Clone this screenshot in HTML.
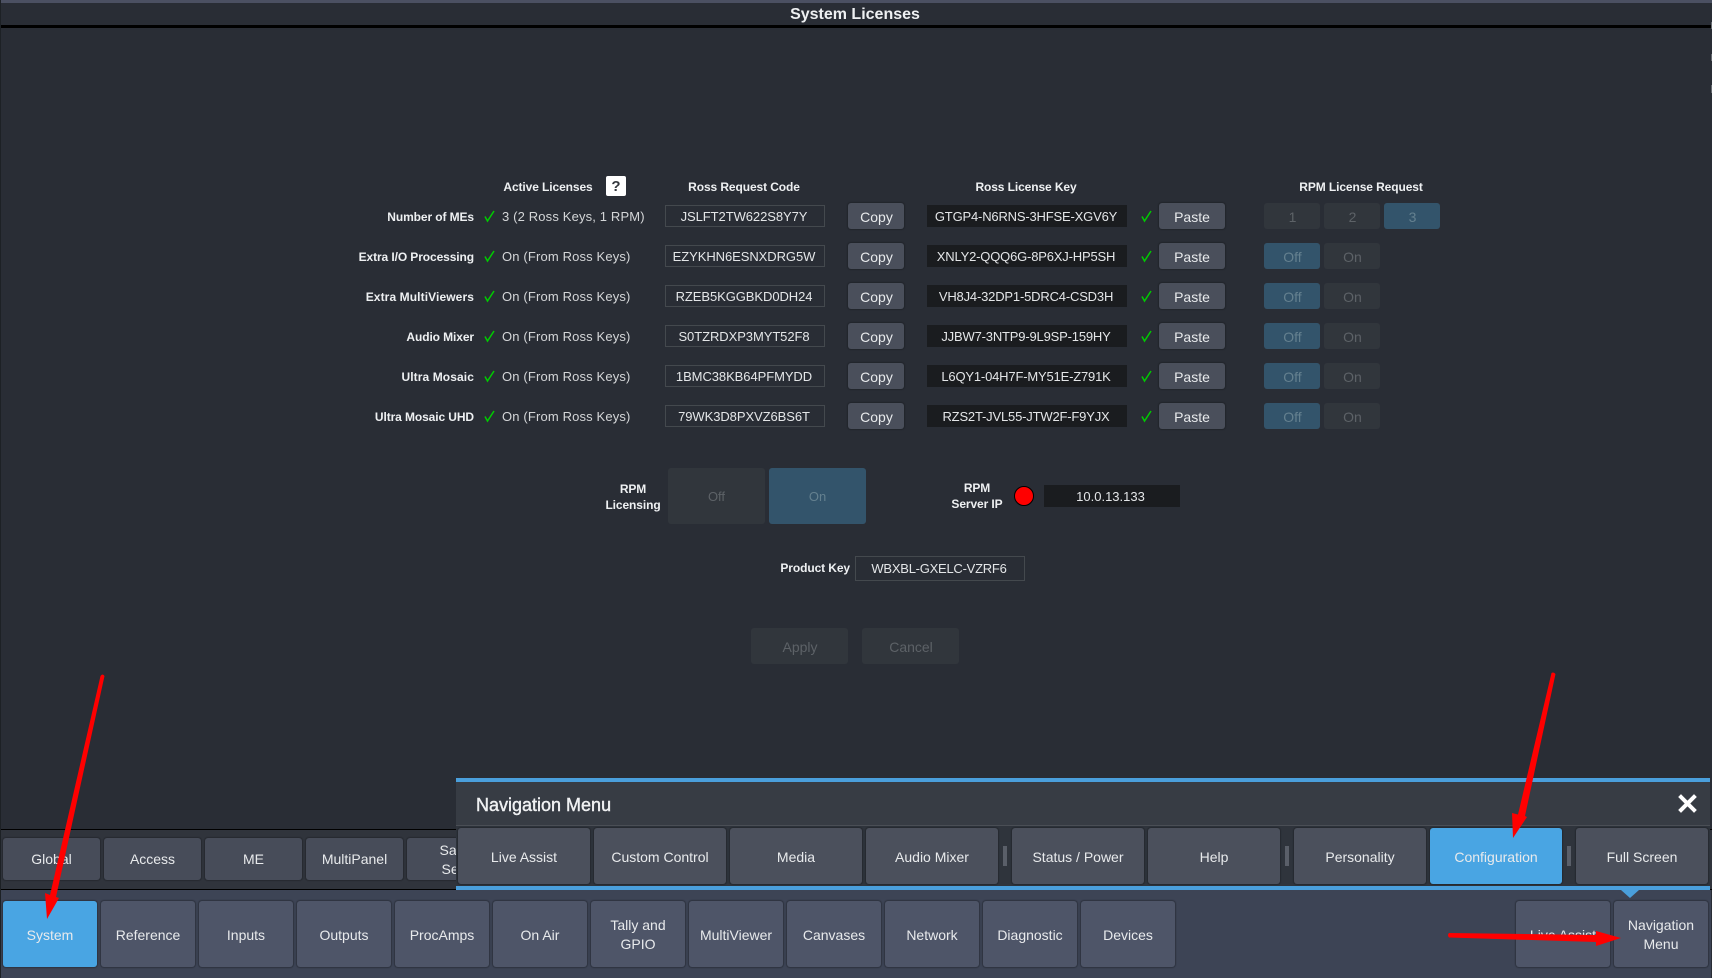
<!DOCTYPE html>
<html><head><meta charset="utf-8"><title>System Licenses</title>
<style>
html,body{margin:0;padding:0;width:1712px;height:978px;overflow:hidden;background:#292d35;font-family:"Liberation Sans",Arial,sans-serif;color:#eef0f2}
div{position:absolute;box-sizing:border-box}
.c{display:flex;align-items:center;justify-content:center;text-align:center;white-space:nowrap}
.h{font-weight:bold;font-size:12px;height:16px;line-height:16px;white-space:nowrap;text-align:center;letter-spacing:-.1px}
.l{font-weight:bold;font-size:12px;left:274px;width:200px;height:16px;line-height:16px;text-align:right;white-space:nowrap;letter-spacing:-.1px}
.t{font-size:13px;left:502px;height:16px;line-height:16px;white-space:nowrap;letter-spacing:.15px;color:#d4d6d8}
.r{left:665px;width:160px;height:22px;border:1px solid #44494e;font-size:13px;letter-spacing:-.07px;color:#e4e6e8;padding-right:2px}
.lk{left:927px;width:200px;height:22px;background:#1a1c1f;font-size:13px;letter-spacing:-.18px;color:#e4e6e8;padding-right:2px}
.btn{height:26px;border-radius:3px;background:#4a4f5b;font-size:14px;box-shadow:0 0 1px 1px rgba(20,22,26,.35);color:#e8eaec;padding-top:1px}
.cp{left:848px;width:56px;padding-left:1px}.ps{left:1159px;width:66px}
.d{width:56px;height:26px;border-radius:3px;background:#31363c;color:#5d6267;font-size:14px;padding-top:1px;padding-left:1px}
.s{background:#33546b;color:#64808f}
.tp{top:838px;height:42px;width:97px;background:#474c59;border-radius:3px;font-size:14px;line-height:19px;box-shadow:0 0 1px 1px rgba(20,22,26,.35);padding-top:1px;color:#e8eaec}
.bt{top:901px;height:66px;width:94px;background:#4e5568;border-radius:3px;font-size:14px;line-height:19px;box-shadow:0 0 1px 1px rgba(30,34,42,.5);padding-top:2px;color:#e8eaec}
.nv{top:828px;height:56px;width:132px;background:#4b505c;border-radius:3px;font-size:14px;box-shadow:0 0 1px 1px rgba(20,22,26,.35);padding-top:1px;color:#e8eaec}
.sp{top:846px;width:4px;height:20px;background:#5a5f69}
</style></head><body>
<div style="left:0;top:0;width:1712px;height:3px;background:#4b5062"></div>
<div style="left:0;top:25px;width:1711px;height:3px;background:#000"></div>
<div style="left:0;top:0;width:1px;height:978px;background:#1d2125"></div>
<div class="c" style="left:655px;top:4px;width:400px;height:22px;font-weight:bold;font-size:16px">System Licenses</div>
<div style="left:1711px;top:22px;width:1px;height:7px;background:#666a70"></div>
<div style="left:1711px;top:54px;width:1px;height:7px;background:#666a70"></div>
<div style="left:1711px;top:85px;width:1px;height:8px;background:#666a70"></div>

<div class="h" style="left:488px;top:179px;width:120px">Active Licenses</div>
<div class="c" style="left:606px;top:176px;width:20px;height:20px;background:#fff;border-radius:2px;color:#33373d;font-weight:bold;font-size:15px;padding-top:1px">?</div>
<div class="h" style="left:664px;top:179px;width:160px">Ross Request Code</div>
<div class="h" style="left:926px;top:179px;width:200px">Ross License Key</div>
<div class="h" style="left:1261px;top:179px;width:200px">RPM License Request</div>

<!-- rows -->
<div class="l" style="top:209px">Number of MEs</div>
<div class="l" style="top:249px">Extra I/O Processing</div>
<div class="l" style="top:289px;letter-spacing:.1px">Extra MultiViewers</div>
<div class="l" style="top:329px">Audio Mixer</div>
<div class="l" style="top:369px;letter-spacing:.1px">Ultra Mosaic</div>
<div class="l" style="top:409px">Ultra Mosaic UHD</div>

<svg style="position:absolute;left:0;top:0" width="1712" height="978">
<g fill="none" stroke="#0c0" stroke-width="1.5">
<path d="M485 216.500l2.500 4.500 6.500-10M485 256.500l2.500 4.500 6.500-10M485 296.500l2.500 4.500 6.500-10M485 336.500l2.500 4.500 6.500-10M485 376.500l2.500 4.500 6.500-10M485 416.500l2.500 4.500 6.500-10"/>
<path d="M1142 216.500l2.500 4.500 6.500-10M1142 256.500l2.500 4.500 6.500-10M1142 296.500l2.500 4.500 6.500-10M1142 336.500l2.500 4.500 6.500-10M1142 376.500l2.500 4.500 6.500-10M1142 416.500l2.500 4.500 6.500-10"/>
</g></svg>

<div class="t" style="top:209px">3 (2 Ross Keys, 1 RPM)</div>
<div class="t" style="top:249px">On (From Ross Keys)</div>
<div class="t" style="top:289px">On (From Ross Keys)</div>
<div class="t" style="top:329px">On (From Ross Keys)</div>
<div class="t" style="top:369px">On (From Ross Keys)</div>
<div class="t" style="top:409px">On (From Ross Keys)</div>

<div class="r c" style="top:205px">JSLFT2TW622S8Y7Y</div>
<div class="r c" style="top:245px">EZYKHN6ESNXDRG5W</div>
<div class="r c" style="top:285px">RZEB5KGGBKD0DH24</div>
<div class="r c" style="top:325px">S0TZRDXP3MYT52F8</div>
<div class="r c" style="top:365px">1BMC38KB64PFMYDD</div>
<div class="r c" style="top:405px">79WK3D8PXVZ6BS6T</div>

<div class="btn cp c" style="top:203px">Copy</div>
<div class="btn cp c" style="top:243px">Copy</div>
<div class="btn cp c" style="top:283px">Copy</div>
<div class="btn cp c" style="top:323px">Copy</div>
<div class="btn cp c" style="top:363px">Copy</div>
<div class="btn cp c" style="top:403px">Copy</div>

<div class="lk c" style="top:205px">GTGP4-N6RNS-3HFSE-XGV6Y</div>
<div class="lk c" style="top:245px">XNLY2-QQQ6G-8P6XJ-HP5SH</div>
<div class="lk c" style="top:285px">VH8J4-32DP1-5DRC4-CSD3H</div>
<div class="lk c" style="top:325px">JJBW7-3NTP9-9L9SP-159HY</div>
<div class="lk c" style="top:365px">L6QY1-04H7F-MY51E-Z791K</div>
<div class="lk c" style="top:405px">RZS2T-JVL55-JTW2F-F9YJX</div>

<div class="btn ps c" style="top:203px">Paste</div>
<div class="btn ps c" style="top:243px">Paste</div>
<div class="btn ps c" style="top:283px">Paste</div>
<div class="btn ps c" style="top:323px">Paste</div>
<div class="btn ps c" style="top:363px">Paste</div>
<div class="btn ps c" style="top:403px">Paste</div>

<div class="d c" style="left:1264px;top:203px">1</div>
<div class="d c" style="left:1324px;top:203px">2</div>
<div class="d s c" style="left:1384px;top:203px">3</div>
<div class="d s c" style="left:1264px;top:243px">Off</div><div class="d c" style="left:1324px;top:243px">On</div>
<div class="d s c" style="left:1264px;top:283px">Off</div><div class="d c" style="left:1324px;top:283px">On</div>
<div class="d s c" style="left:1264px;top:323px">Off</div><div class="d c" style="left:1324px;top:323px">On</div>
<div class="d s c" style="left:1264px;top:363px">Off</div><div class="d c" style="left:1324px;top:363px">On</div>
<div class="d s c" style="left:1264px;top:403px">Off</div><div class="d c" style="left:1324px;top:403px">On</div>

<!-- RPM licensing -->
<div class="h" style="left:593px;top:481px;width:80px">RPM</div>
<div class="h" style="left:593px;top:497px;width:80px">Licensing</div>
<div class="d c" style="left:668px;top:468px;width:97px;height:56px;font-size:13px;padding:0">Off</div>
<div class="d s c" style="left:769px;top:468px;width:97px;height:56px;font-size:13px;padding:0">On</div>
<div class="h" style="left:937px;top:480px;width:80px">RPM</div>
<div class="h" style="left:937px;top:496px;width:80px">Server IP</div>
<div style="left:1014px;top:486px;width:20px;height:20px;border-radius:50%;background:#f00;border:1px solid #000"></div>
<div class="lk c" style="left:1044px;top:485px;width:136px;letter-spacing:0;padding-right:3px">10.0.13.133</div>
<div class="h" style="left:760px;top:560px;width:90px;text-align:right">Product Key</div>
<div class="r c" style="left:855px;top:556px;width:170px;height:25px;letter-spacing:-.25px">WBXBL-GXELC-VZRF6</div>
<div class="d c" style="left:751px;top:628px;width:97px;height:36px">Apply</div>
<div class="d c" style="left:862px;top:628px;width:97px;height:36px">Cancel</div>

<!-- upper tab bar -->
<div style="left:1px;top:829px;width:1711px;height:61px;background:#30343c;border-top:1px solid #000;border-bottom:1px solid #000"></div>
<div class="tp c" style="left:3px">Global</div>
<div class="tp c" style="left:104px">Access</div>
<div class="tp c" style="left:205px">ME</div>
<div class="tp c" style="left:306px">MultiPanel</div>
<div class="tp c" style="left:407px;white-space:normal">Save<br>Sets</div>

<!-- bottom bar -->
<div style="left:1px;top:890px;width:1710px;height:88px;background:#3d4455"></div>
<div class="bt c" style="left:3px;background:#49a5e3">System</div>
<div class="bt c" style="left:101px">Reference</div>
<div class="bt c" style="left:199px">Inputs</div>
<div class="bt c" style="left:297px">Outputs</div>
<div class="bt c" style="left:395px">ProcAmps</div>
<div class="bt c" style="left:493px">On Air</div>
<div class="bt c" style="left:591px;padding-top:1px">Tally and<br>GPIO</div>
<div class="bt c" style="left:689px">MultiViewer</div>
<div class="bt c" style="left:787px">Canvases</div>
<div class="bt c" style="left:885px">Network</div>
<div class="bt c" style="left:983px">Diagnostic</div>
<div class="bt c" style="left:1081px">Devices</div>
<div class="bt c" style="left:1516px">Live Assist</div>
<div class="bt c" style="left:1614px;padding-top:1px">Navigation<br>Menu</div>

<!-- nav panel -->
<div style="left:456px;top:778px;width:1254px;height:112px;background:#2f343c"></div>
<div style="left:456px;top:782px;width:1254px;height:44px;background:#373c44;border-bottom:1px solid #4a4e55"></div>
<div style="left:456px;top:778px;width:1254px;height:4px;background:#4a9fdc"></div>
<div style="left:456px;top:886px;width:1254px;height:4px;background:#4a9fdc"></div>
<div style="left:476px;top:794px;height:22px;line-height:22px;font-size:18px;white-space:nowrap;-webkit-text-stroke:.4px #f4f5f6">Navigation Menu</div>
<div class="nv c" style="left:458px">Live Assist</div>
<div class="nv c" style="left:594px">Custom Control</div>
<div class="nv c" style="left:730px">Media</div>
<div class="nv c" style="left:866px">Audio Mixer</div>
<div class="sp" style="left:1003px"></div>
<div class="nv c" style="left:1012px">Status / Power</div>
<div class="nv c" style="left:1148px">Help</div>
<div class="sp" style="left:1285px"></div>
<div class="nv c" style="left:1294px">Personality</div>
<div class="nv c" style="left:1430px;background:#49a5e3">Configuration</div>
<div class="sp" style="left:1567px"></div>
<div class="nv c" style="left:1576px">Full Screen</div>

<svg style="position:absolute;left:0;top:0" width="1712" height="978">
<path d="M1621 890h18l-9 8z" fill="#4a9fdc"/>
<path d="M1681 797l13 13M1694 797l-13 13" stroke="#fff" stroke-width="4" stroke-linecap="square" fill="none"/>
<g fill="#f00">
<path d="M100.500 676Q102.500 673 104.500 676L56 897 59 898 47 919 45 893 50 895Z"/>
<path d="M1551.500 673Q1553.500 671.500 1555.500 674L1525 816 1527 817 1513 838 1512 813 1518 814.500Z"/>
<path d="M1449 933Q1447 935 1449 937.500L1596 942V946L1621 938 1596 931V935Z"/>
</g>
</svg>
</body></html>
